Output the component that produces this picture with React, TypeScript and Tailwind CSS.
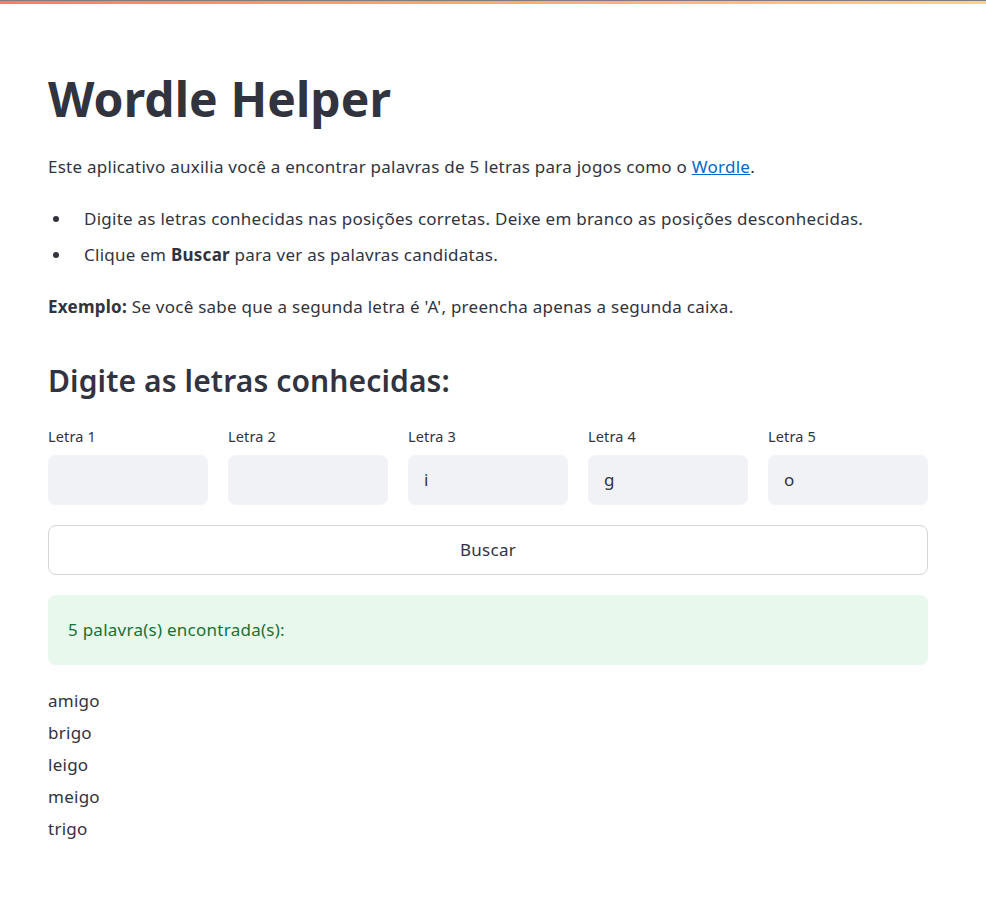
import React from "react";

const words = ["amigo", "brigo", "leigo", "meigo", "trigo"];
const letters = ["", "", "i", "g", "o"];

export default function App() {
  return (
    <div className="min-h-[904px] bg-white text-[#31333f] font-['Noto_Sans',sans-serif]">
      <div className="h-px w-full bg-[#7f7c84]" />
      <div className="h-[3px] w-full bg-[linear-gradient(90deg,#ff7a66,#ffd47a)]" />
      <div className="pl-12 pt-[66px]">
        <div className="w-[880px] tracking-[0.016em]">
          <h1 className="text-[48px] font-bold leading-[58px] tracking-[0.002em]">Wordle Helper</h1>
          <p className="mt-[27px] text-[17px] leading-6">
            Este aplicativo auxilia você a encontrar palavras de 5 letras para jogos como o{" "}
            <a className="text-[#0068c9] underline" href="#">Wordle</a>.
          </p>
          <ul className="mt-[28px] flex flex-col gap-3 text-[17px] leading-6">
            <li className="flex items-center">
              <span className="w-9 flex items-center pl-[5px]">
                <span className="block w-[6px] h-[6px] rounded-full bg-[#31333f]" />
              </span>
              <span>Digite as letras conhecidas nas posições corretas. Deixe em branco as posições desconhecidas.</span>
            </li>
            <li className="flex items-center">
              <span className="w-9 flex items-center pl-[5px]">
                <span className="block w-[6px] h-[6px] rounded-full bg-[#31333f]" />
              </span>
              <span>Clique em <b className="font-bold">Buscar</b> para ver as palavras candidatas.</span>
            </li>
          </ul>
          <p className="mt-[28px] text-[17px] leading-6">
            <b className="font-bold">Exemplo:</b> Se você sabe que a segunda letra é 'A', preencha apenas a segunda caixa.
          </p>
          <h2 className="mt-[44px] text-[30px] font-semibold leading-9 tracking-[0.004em]">Digite as letras conhecidas:</h2>
          <div className="mt-[27px] grid grid-cols-5 gap-5">
            {letters.map((l, i) => (
              <div key={i} className="flex flex-col">
                <label className="text-[14.5px] leading-5 mb-[9px] tracking-[0.01em]">Letra {i + 1}</label>
                <div className="h-[50px] rounded-lg bg-[#f0f2f6] flex items-center px-4 text-[17px]">{l}</div>
              </div>
            ))}
          </div>
          <button className="mt-5 w-full h-[50px] rounded-lg border border-[#d5d6d9] bg-white text-[17px] tracking-[0.016em]">Buscar</button>
          <div className="mt-5 h-[70px] rounded-lg bg-[#e8f8ed] text-[#177233] flex items-center px-5 text-[17px]">
            5 palavra(s) encontrada(s):
          </div>
          <div className="mt-[20px] flex flex-col text-[17px] leading-8">
            {words.map((w) => (
              <div key={w}>{w}</div>
            ))}
          </div>
        </div>
      </div>
    </div>
  );
}
